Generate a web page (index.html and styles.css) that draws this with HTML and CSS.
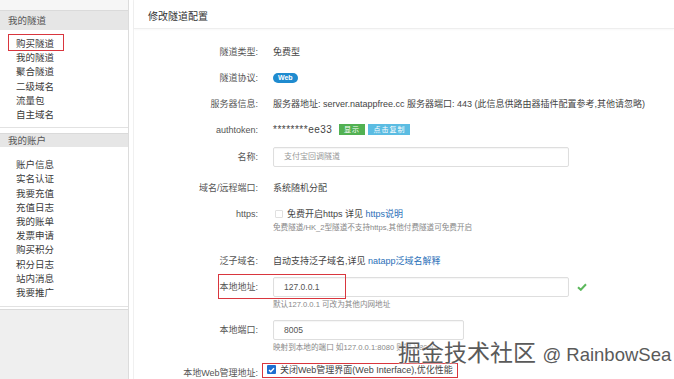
FILE: index.html
```html
<!DOCTYPE html>
<html lang="zh-CN">
<head>
    <meta charset="UTF-8">
    <title>修改隧道配置</title>
    <link rel="stylesheet" href="styles.css">
</head>
<body>
    <div class="page">
        <aside class="sidebar">
            <div class="side-top"></div>
            <div class="side-panel">
                <div class="side-head side-head-first">我的隧道</div>
                <ul class="side-list">
                    <li class="marked">购买隧道</li>
                    <li>我的隧道</li>
                    <li>聚合隧道</li>
                    <li>二级域名</li>
                    <li>流量包</li>
                    <li>自主域名</li>
                </ul>
            </div>
            <div class="side-panel side-panel-account">
                <div class="side-head">我的账户</div>
                <ul class="side-list side-list-account">
                    <li>账户信息</li>
                    <li>实名认证</li>
                    <li>我要充值</li>
                    <li>充值日志</li>
                    <li>我的账单</li>
                    <li>发票申请</li>
                    <li>购买积分</li>
                    <li>积分日志</li>
                    <li>站内消息</li>
                    <li>我要推广</li>
                </ul>
            </div>
            <div class="side-rest"></div>
        </aside>

        <main class="main">
            <div class="main-title">修改隧道配置</div>
            <div class="form">
                <div class="row">
                    <div class="label">隧道类型:</div>
                    <div class="value">免费型</div>
                </div>
                <div class="row">
                    <div class="label">隧道协议:</div>
                    <div class="value"><span class="badge">Web</span></div>
                </div>
                <div class="row">
                    <div class="label">服务器信息:</div>
                    <div class="value nowrap">服务器地址: server.natappfree.cc 服务器端口: 443 (此信息供路由器插件配置参考,其他请忽略)</div>
                </div>
                <div class="row">
                    <div class="label">authtoken:</div>
                    <div class="value"><span class="token">********ee33</span> <span class="btn btn-green">显示</span> <span class="btn btn-blue">点击复制</span></div>
                </div>
                <div class="row row-input">
                    <div class="label">名称:</div>
                    <div class="value"><div class="input input-wide placeholder">支付宝回调隧道</div></div>
                </div>
                <div class="row">
                    <div class="label">域名/远程端口:</div>
                    <div class="value">系统随机分配</div>
                </div>
                <div class="row row-https">
                    <div class="label">https:</div>
                    <div class="value">
                        <div><span class="checkbox"></span>免费开启https 详见 <a class="link">https说明</a></div>
                        <div class="help help-tight">免费隧道/HK_2型隧道不支持https,其他付费隧道可免费开启</div>
                    </div>
                </div>
                <div class="row">
                    <div class="label">泛子域名:</div>
                    <div class="value">自动支持泛子域名,详见 <a class="link">natapp泛域名解释</a></div>
                </div>
                <div class="row row-help row-marked">
                    <div class="label">本地地址:</div>
                    <div class="value">
                        <div class="input-line">
                            <div class="input input-wide">127.0.0.1</div>
                            <svg class="ok" width="10" height="8" viewBox="0 0 10 8"><path d="M1 4.2 L3.8 6.8 L9 1.2" fill="none" stroke="#5cb85c" stroke-width="2"/></svg>
                        </div>
                        <div class="help">默认127.0.0.1 可改为其他内网地址</div>
                    </div>
                    <div class="mark-box"></div>
                </div>
                <div class="row row-help">
                    <div class="label">本地端口:</div>
                    <div class="value">
                        <div class="input input-short">8005</div>
                        <div class="help">映射到本地的端口 如127.0.0.1:8080 则输入8080</div>
                    </div>
                </div>
                <div class="row">
                    <div class="label">本地Web管理地址:</div>
                    <div class="value value-boxed"><span class="checkbox checked"><svg width="7" height="6" viewBox="0 0 7 6"><path d="M1 3 L2.8 4.7 L6 1.2" fill="none" stroke="#fff" stroke-width="1.4"/></svg></span>关闭Web管理界面(Web Interface),优化性能</div>
                </div>
            </div>
            <div class="watermark">掘金技术社区 <span class="wm-latin">@ RainbowSea</span></div>
        </main>
    </div>
</body>
</html>
```

FILE: styles.css
```css
body {
    margin: 0;
    font-family: "Liberation Sans", "Noto Sans CJK SC", sans-serif;
    font-size: 9px;
    color: #444;
    background: #fff;
}

.page {
    display: flex;
    height: 379px;
    overflow: hidden;
}

/* sidebar */
.sidebar {
    width: 128px;
    flex-shrink: 0;
    border-right: 1px solid #dcdcdc;
    display: flex;
    flex-direction: column;
    font-size: 9.5px;
}

.side-top {
    height: 10px;
    background: #f6f6f6;
}

.side-panel {
    border-bottom: 1px solid #e2e2e2;
}

.side-panel-account {
    margin-top: 5px;
}

.side-head {
    background: #e6e6e6;
    border-top: 1px solid #dadada;
    color: #555;
    padding-left: 8px;
    height: 13px;
    line-height: 13px;
}

.side-head-first {
    height: 19px;
    line-height: 19px;
}

.side-list {
    list-style: none;
    margin: 0;
    padding: 7px 0 5px;
}

.side-list-account {
    padding: 11px 0 6px;
}

.side-list li {
    position: relative;
    padding-left: 16px;
    line-height: 14.2px;
    color: #3a3a3a;
}

.side-list li.marked::after {
    content: '';
    position: absolute;
    left: 8px;
    top: -3px;
    width: 56px;
    height: 17px;
    box-sizing: border-box;
    border: 1.5px solid #d9363e;
}

.side-rest {
    flex: 1;
    margin-top: 2px;
    border-top: 1px solid #dadada;
    background: #efefef;
}

/* main */
.main {
    flex: 1;
    position: relative;
    margin-left: 4px;
    border-left: 1px solid #f0f0f0;
}

.main-title {
    height: 28px;
    line-height: 34px;
    padding-left: 14px;
    font-size: 10px;
    color: #333;
    border-bottom: 1px solid #eee;
    box-shadow: 0 1px 2px rgba(0, 0, 0, 0.03);
}

.form {
    padding-top: 10px;
}

.row {
    display: flex;
    align-items: flex-start;
    padding: 3px 0;
    line-height: 20px;
}

.row-input {
    padding: 4px 0 8px;
}

.row-https {
    padding-bottom: 14px;
}

.row-help {
    padding-bottom: 6px;
}

.row-marked {
    position: relative;
}

.label {
    width: 124px;
    flex-shrink: 0;
    text-align: right;
    color: #555;
}

.value {
    margin-left: 15px;
    color: #444;
}

.nowrap {
    white-space: nowrap;
}

.token {
    font-size: 10px;
    letter-spacing: 0.5px;
}

.badge {
    display: inline-block;
    vertical-align: middle;
    background: #1f8bcf;
    color: #fff;
    font-size: 7px;
    font-weight: bold;
    line-height: 10px;
    padding: 0 5px;
    border-radius: 6px;
    margin-top: -2px;
}

.btn {
    display: inline-block;
    vertical-align: middle;
    color: #fff;
    font-size: 7px;
    line-height: 11px;
    padding: 0 5px;
    letter-spacing: 1px;
    margin-top: -2px;
}

.btn-green {
    background: #52b152;
    margin-left: 4px;
}

.btn-blue {
    background: #5bbce2;
    margin-left: 1px;
}

.input {
    box-sizing: border-box;
    height: 20px;
    line-height: 18px;
    border: 1px solid #dedede;
    border-radius: 2px;
    padding-left: 10px;
    font-size: 8.5px;
    color: #555;
    box-shadow: inset 0 1px 1px rgba(0, 0, 0, 0.04);
}

.input-wide {
    width: 296px;
}

.input-short {
    width: 191px;
}

.placeholder {
    color: #999;
    font-size: 8px;
}

.input-line {
    display: flex;
    align-items: center;
}

.ok {
    margin-left: 8px;
}

.help {
    font-size: 7.6px;
    line-height: 12px;
    color: #888;
    margin-top: 2px;
}

.help-tight {
    margin-top: -2px;
}

.link {
    color: #2a6fb8;
}

.checkbox {
    display: inline-block;
    vertical-align: middle;
    box-sizing: border-box;
    width: 8px;
    height: 8px;
    border: 1px solid #e0e0e0;
    border-radius: 1px;
    margin: -2px 4px 0 2px;
}

.checkbox.checked {
    width: 9px;
    height: 9px;
    border: none;
    background: #1e6fd0;
    margin: -2px 4px 0 0;
    line-height: 0;
}

.checkbox.checked svg {
    margin: 1.5px 0 0 1px;
}

.value-boxed {
    margin-left: 4px;
    margin-top: 0;
    border: 1.5px solid #d9363e;
    padding: 0 4px 0 4px;
    line-height: 13px;
}

.mark-box {
    position: absolute;
    left: 84px;
    top: 0;
    width: 128px;
    height: 25px;
    box-sizing: border-box;
    border: 1.5px solid #d9363e;
}

.watermark {
    position: absolute;
    left: 264px;
    top: 337px;
    font-size: 23px;
    line-height: 32px;
    white-space: nowrap;
    color: #5a5a5a;
    text-shadow: 0 0 2px #fff, 0 0 2px #fff;
}

.wm-latin {
    font-size: 18.5px;
}
```
